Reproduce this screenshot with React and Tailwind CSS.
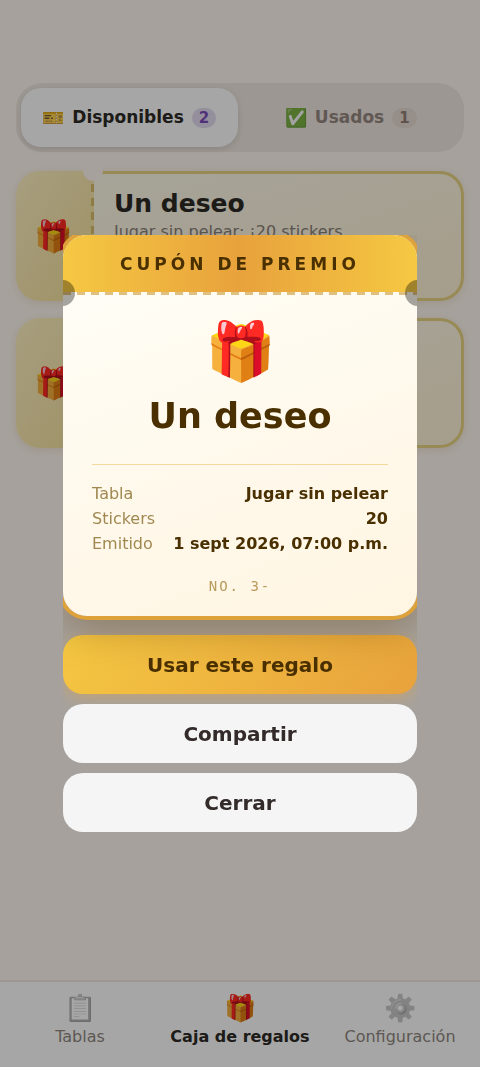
import { useState } from "react";
import clsx from "clsx";

const TABS = [
  { id: "available", emoji: "🎫", label: "Disponibles", count: 2 },
  { id: "used", emoji: "✅", label: "Usados", count: 1 },
];

const GIFTS = [
  { id: 1, title: "Un deseo", detail: "Jugar sin pelear: ¡20 stickers" },
  { id: 2 },
];

const NAV = [
  { id: "boards", emoji: "📋", label: "Tablas" },
  { id: "gifts", emoji: "🎁", label: "Caja de regalos" },
  { id: "settings", emoji: "⚙️", label: "Configuración" },
];

const ROWS = [
  ["Tabla", "Jugar sin pelear"],
  ["Stickers", "20"],
  ["Emitido", "1 sept 2026, 07:00 p.m."],
];

const GiftCard = ({ gift }) => (
  <li className="relative flex h-[130px] rounded-3xl shadow-[0_2px_10px_rgba(120,90,20,0.12)]">
    {/* stub with the tear line */}
    <div className="relative flex w-[78px] shrink-0 items-center justify-center rounded-l-3xl bg-linear-to-br from-[#fff3c4] to-[#f4e09a] pr-1 text-[31px] leading-none">
      🎁
      <span className="absolute right-0 inset-y-[13px] w-[3px] bg-[repeating-linear-gradient(to_bottom,#d9bf68_0_8px,transparent_8px_14px)]" />
    </div>
    <div className="min-w-0 flex-1 rounded-r-3xl border-y-3 border-r-3 border-[#ead482] bg-linear-to-br from-[#fffbeb] to-[#fff3d6] px-5 pt-[14px]">
      {gift.title && (
        <>
          <h2 className="text-[25px] leading-8 font-bold text-[#2d2a26]">{gift.title}</h2>
          <p className="text-[16px] leading-6 text-[#8a8178]">{gift.detail}</p>
        </>
      )}
    </div>
    {/* punched notches */}
    <span className="absolute -top-[10px] left-[67px] size-5 rounded-full bg-[#fff8f0]" />
    <span className="absolute -bottom-[10px] left-[67px] size-5 rounded-full bg-[#fff8f0]" />
  </li>
);

const Coupon = () => (
  <section className="relative rounded-3xl bg-linear-160 from-[#fffef8] to-[#fff5e2] shadow-[0_0_0_4px_#dfa23a,0_12px_40px_rgba(100,60,0,0.4)]">
    <header className="rounded-t-3xl bg-linear-to-r from-[#f5c842] via-[#e8a23c] to-[#f5c842] pt-[17px] pb-[15px] text-center text-[17px] leading-[25px] font-bold tracking-[4px] text-[#4a3000]">
      CUPÓN DE PREMIO
    </header>
    <div className="h-[3px] bg-[repeating-linear-gradient(to_right,#e0c080_0_8px,transparent_8px_14px)]" />
    <span className="absolute top-[45px] -left-[14px] size-[26px] rounded-full bg-black/35" />
    <span className="absolute top-[45px] -right-[14px] size-[26px] rounded-full bg-black/35" />
    <div className="px-[29px] pt-5 pb-5 text-center">
      <div className="text-[57px] leading-[72px]">🎁</div>
      <h1 className="mt-[9px] text-[35px] leading-10 font-bold text-[#4a3000]">Un deseo</h1>
      <dl className="mt-7 border-t border-[#f3d9a0] pt-4 text-[16px] leading-[25px]">
        {ROWS.map(([name, value]) => (
          <div key={name} className="flex justify-between">
            <dt className="text-[#a08850]">{name}</dt>
            <dd className="font-bold text-[#4a3000]">{value}</dd>
          </div>
        ))}
      </dl>
      <p className="mt-5 font-['DejaVu_Sans_Mono',monospace] text-[14px] leading-5 tracking-[2px] text-[#b89a5a]">NO. 3-</p>
    </div>
  </section>
);

export default function App() {
  const [tab, setTab] = useState("available");
  const [open, setOpen] = useState(true);

  return (
    <div className="relative flex min-h-screen flex-col bg-[#fff8f0] font-['DejaVu_Sans',sans-serif]">
      <main className="flex-1 px-4 pt-[83px]">
        <div className="flex gap-[5px] rounded-[26px] bg-[#f0e8e0] p-[5px]">
          {TABS.map((t) => (
            <button
              key={t.id}
              onClick={() => setTab(t.id)}
              className={clsx(
                "flex h-[59px] flex-1 items-center justify-center gap-2 rounded-[20px] text-[17px] font-bold",
                tab === t.id ? "bg-white text-[#2d2a26] shadow-[0_2px_6px_rgba(0,0,0,0.12)]" : "text-[#968880]"
              )}
            >
              <span className="text-[18px]">{t.emoji}</span>
              <span>{t.label}</span>
              <span
                className={clsx(
                  "rounded-full px-[7px] text-[15px] leading-5",
                  tab === t.id ? "bg-[#e4dcf0] text-[#7c4dbd]" : "bg-[#e6dad2] text-[#94807a]"
                )}
              >
                {t.count}
              </span>
            </button>
          ))}
        </div>
        <ul className="mt-[19px] flex flex-col gap-[17px]">
          {GIFTS.map((g) => (
            <GiftCard key={g.id} gift={g} />
          ))}
        </ul>
      </main>

      <nav className="flex h-[87px] border-t-2 border-[#f0e8e0] bg-white">
        {NAV.map((n) => (
          <a
            key={n.id}
            href={`#${n.id}`}
            className={clsx(
              "flex flex-1 flex-col items-center pt-[9px] text-[16px] leading-6 whitespace-nowrap",
              n.id === "gifts" ? "font-bold text-[#2d2a26]" : "text-[#8f8880]"
            )}
          >
            <span className={clsx("text-[26px] leading-[34px]", n.id !== "gifts" && "opacity-60 grayscale")}>{n.emoji}</span>
            {n.label}
          </a>
        ))}
      </nav>

      {open && (
        <div className="fixed inset-0 flex items-center justify-center bg-black/35 px-[63px]">
          <div role="dialog" aria-modal="true" className="flex w-full flex-col gap-[10px] overflow-hidden text-[20px] leading-7 font-bold">
            <div className="mb-[9px] font-normal">
              <Coupon />
            </div>
            <button className="h-[59px] rounded-[20px] bg-linear-135 from-[#f5c842] to-[#e8a23c] text-[#4a3000] shadow-[0_4px_14px_rgba(232,162,60,0.4)]">
              Usar este regalo
            </button>
            <button className="h-[59px] rounded-[20px] bg-[#f5f5f5] text-[#332a2a]">Compartir</button>
            <button className="h-[59px] rounded-[20px] bg-[#f5f5f5] text-[#332a2a]" onClick={() => setOpen(false)}>
              Cerrar
            </button>
          </div>
        </div>
      )}
    </div>
  );
}
